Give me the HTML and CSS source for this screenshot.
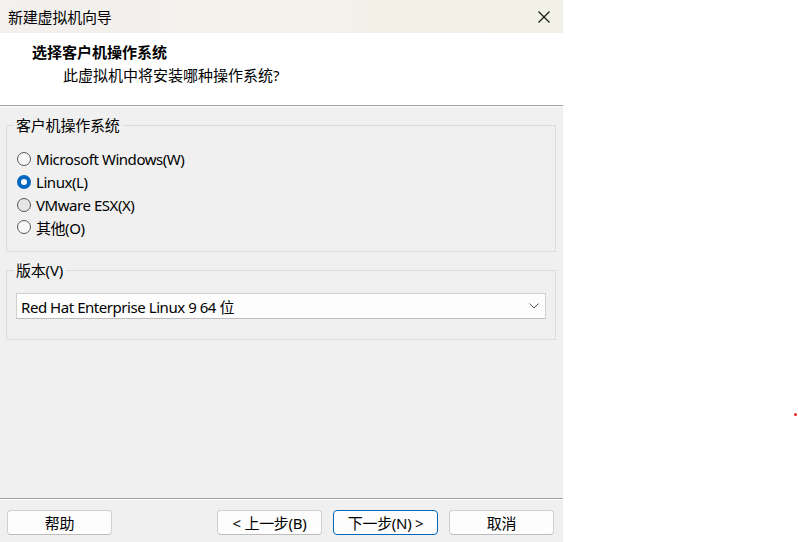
FILE: index.html
```html
<!DOCTYPE html>
<html>
  <head>
    <meta charset="utf-8" />
    <title>新建虚拟机向导</title>
    <link rel="stylesheet" href="styles.css">
  </head>

  <body>
    <div class="wizard">
      <!-- 标题栏 -->
      <div class="titlebar">
        <span class="title">新建虚拟机向导</span>
        <span class="close">
          <svg width="14" height="14" viewBox="0 0 14 14">
            <path d="M1.5 1.5 L12.5 12.5 M12.5 1.5 L1.5 12.5" stroke="#1a1a1a" stroke-width="1.2" fill="none" />
          </svg>
        </span>
      </div>

      <!-- 页头 -->
      <div class="head">
        <div class="head_title">选择客户机操作系统</div>
        <div class="head_sub">此虚拟机中将安装哪种操作系统?</div>
      </div>

      <div class="content">
        <fieldset class="group group_os">
          <legend>客户机操作系统</legend>
          <label class="radio"><span class="dot_box"></span>Microsoft Windows(W)</label>
          <label class="radio checked"><span class="dot_box"></span>Linux(L)</label>
          <label class="radio hover"><span class="dot_box"></span>VMware ESX(X)</label>
          <label class="radio"><span class="dot_box"></span>其他(O)</label>
        </fieldset>

        <fieldset class="group group_ver">
          <legend>版本(V)</legend>
          <div class="combo">
            <span>Red Hat Enterprise Linux 9 64 位</span>
            <svg width="10" height="6" viewBox="0 0 10 6">
              <path d="M0.5 0.5 L5 5 L9.5 0.5" stroke="#555" stroke-width="1" fill="none" />
            </svg>
          </div>
        </fieldset>
      </div>

      <div class="foot">
        <button class="btn">帮助</button>
        <div class="foot_right">
          <button class="btn">&lt; 上一步(B)</button>
          <button class="btn btn_default">下一步(N) &gt;</button>
          <button class="btn">取消</button>
        </div>
      </div>
    </div>

    <span class="stray"></span>
  </body>
</html>
```

FILE: styles.css
```css
html,
body {
  margin: 0;
  padding: 0;
  background: #fff;
}
body {
  position: relative;
  width: 798px;
  height: 542px;
  overflow: hidden;
  font-family: "Noto Sans", "Noto Sans CJK SC", sans-serif;
  font-size: 15px;
  color: #000;
}
.wizard {
  width: 563px;
  height: 542px;
  display: flex;
  flex-direction: column;
  background: #f0f0f0;
}

/* 标题栏 */
.titlebar {
  height: 33px;
  display: flex;
  align-items: center;
  justify-content: space-between;
  padding: 0 12px 0 8px;
  background: linear-gradient(90deg, #f3f0ef, #f2f2ea 60%, #f1f1e6);
}
.title {
  letter-spacing: -0.2px;
}
.close {
  display: flex;
  width: 14px;
  height: 14px;
}

/* 页头 */
.head {
  height: 72px;
  background: #fff;
  border-bottom: 1px solid #a0a0a0;
  box-shadow: 0 1px 0 #fff;
}
.head_title {
  margin: 9px 0 0 32px;
  font-weight: bold;
  line-height: 20px;
}
.head_sub {
  margin: 3px 0 0 63px;
  line-height: 20px;
}

/* 分组框 */
.content {
  flex: 1;
  padding: 10px 7px 0 6px;
}
.group {
  margin: 0;
  padding: 0 9px;
  border: 1px solid #dcdcdc;
  box-sizing: border-box;
}
.group legend {
  padding: 0 3px 0 2px;
  margin-left: -2px;
  line-height: 18px;
  letter-spacing: -0.2px;
}
.group_os {
  height: 136px;
  padding-top: 14px;
}
.group_ver {
  margin-top: 9px;
  height: 79px;
  padding-top: 14px;
}

.radio {
  display: flex;
  align-items: center;
  height: 22.7px;
  letter-spacing: -0.45px;
}
.dot_box {
  flex-shrink: 0;
  width: 14px;
  height: 14px;
  margin: 0 5px 0 1px;
  border: 1px solid #5a5a5a;
  border-radius: 50%;
  background: #f7f7f7;
  box-sizing: border-box;
}
.radio.hover .dot_box {
  background: #e6e6e6;
  border-color: #555;
}
.radio.checked .dot_box {
  border: 4px solid #0067c0;
  background: #fff;
}

.combo {
  height: 26px;
  box-sizing: border-box;
  display: flex;
  align-items: center;
  justify-content: space-between;
  padding: 0 6px 0 4px;
  background: #fdfdfd;
  border: 1px solid #d0d0d0;
  border-bottom-color: #bdbdbd;
  letter-spacing: -0.45px;
}

/* 底部按钮 */
.foot {
  height: 44px;
  border-top: 1px solid #a0a0a0;
  box-shadow: inset 0 1px 0 #fff;
  display: flex;
  align-items: flex-start;
  justify-content: space-between;
  padding: 11px 9px 0 7px;
  box-sizing: border-box;
}
.foot_right {
  display: flex;
  gap: 11px;
}
.btn {
  width: 105px;
  height: 25px;
  padding: 0;
  font: inherit;
  letter-spacing: -0.3px;
  color: #000;
  background: #fdfdfd;
  border: 1px solid #d0d0d0;
  border-bottom-color: #bcbcbc;
  border-radius: 4px;
}
.btn_default {
  border-color: #0067c0;
}

.stray {
  position: absolute;
  left: 794px;
  top: 413px;
  width: 3px;
  height: 3px;
  border-radius: 50%;
  background: #f02020;
}
```
